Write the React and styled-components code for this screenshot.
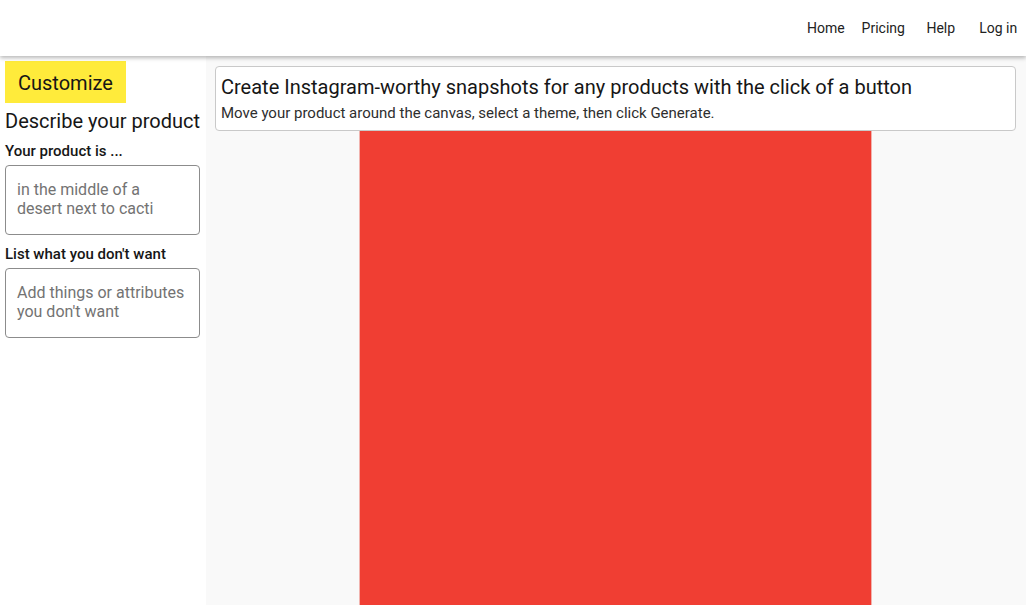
import React from 'react'
import styled, { createGlobalStyle } from 'styled-components'

const GlobalStyle = createGlobalStyle`
    html, body {
        margin: 0;
        padding: 0;
        height: 100%;
    }
    body {
        font-family: Roboto, 'Liberation Sans', sans-serif;
        color: #161616;
        background: #ffffff;
        overflow: hidden;
    }
`

const Page = styled.div`
    display: flex;
    flex-direction: column;
    height: 605px;
`

const Header = styled.header`
    height: 56px;
    flex: none;
    display: flex;
    align-items: center;
    justify-content: flex-end;
    background: #ffffff;
    box-shadow: 0 2px 4px rgba(0, 0, 0, 0.28);
    position: relative;
    z-index: 2;
`

const NavLink = styled.a`
    width: 57.5px;
    text-align: center;
    font-size: 14px;
    color: #222222;
    text-decoration: none;
    line-height: 20px;
    &:last-child {
        margin-right: -1px;
    }
`

const Body = styled.div`
    flex: 1;
    display: flex;
    min-height: 0;
`

const Sidebar = styled.aside`
    width: 206px;
    flex: none;
    box-sizing: border-box;
    padding: 5px 6px 0 5px;
    background: #ffffff;
    display: flex;
    flex-direction: column;
    align-items: flex-start;
`

const CustomizeButton = styled.button`
    height: 42px;
    padding: 2px 13px 0;
    border: none;
    border-radius: 0;
    background: #ffeb3b;
    font-family: inherit;
    font-size: 20px;
    color: #161616;
`

const SectionTitle = styled.h2`
    margin: 6px 0 0;
    font-size: 20px;
    font-weight: 400;
    line-height: 24px;
    white-space: nowrap;
`

const FieldLabel = styled.label`
    display: block;
    margin-top: ${p => p.$top}px;
    font-size: 15px;
    font-weight: 500;
    line-height: 18px;
`

const TextBox = styled.textarea`
    display: block;
    margin-top: 5px;
    width: 195px;
    height: 70px;
    box-sizing: border-box;
    padding: 14px 11px 12px;
    border: 1px solid #8c8c8c;
    border-radius: 4px;
    resize: none;
    font-family: inherit;
    font-size: 16px;
    line-height: 19px;
    color: #1f1f1f;
    background: #ffffff;
    &::placeholder {
        color: #737373;
    }
`

const Main = styled.main`
    flex: 1;
    background: #f9f9f9;
    padding: 10px 10px 0 9px;
    display: flex;
    flex-direction: column;
    align-items: center;
    min-width: 0;
`

const InfoCard = styled.div`
    align-self: stretch;
    background: #ffffff;
    border: 1px solid #c9c9c9;
    border-radius: 4px;
    padding: 8px 5px 7px;
`

const CardTitle = styled.h1`
    margin: 0;
    font-size: 20px;
    font-weight: 400;
    line-height: 24px;
    color: #161616;
`

const CardText = styled.p`
    margin: 4px 0 0;
    font-size: 15px;
    line-height: 20px;
    color: #2e2e2e;
`

const Canvas = styled.div`
    width: 511px;
    flex: 1;
    background: #f03e33;
    border-left: 1px solid #f1b3ae;
    border-right: 1px solid #f1b3ae;
`

const navItems = ['Home', 'Pricing', 'Help', 'Log in']

export default function App() {
    return (
        <Page>
            <GlobalStyle />
            <Header>
                {navItems.map(item => (
                    <NavLink key={item} href="#">
                        {item}
                    </NavLink>
                ))}
            </Header>
            <Body>
                <Sidebar>
                    <CustomizeButton>Customize</CustomizeButton>
                    <SectionTitle>Describe your product</SectionTitle>
                    <FieldLabel $top={9}>Your product is ...</FieldLabel>
                    <TextBox placeholder="in the middle of a desert next to cacti" />
                    <FieldLabel $top={10}>List what you don't want</FieldLabel>
                    <TextBox placeholder="Add things or attributes you don't want" />
                </Sidebar>
                <Main>
                    <InfoCard>
                        <CardTitle>
                            Create Instagram-worthy snapshots for any products
                            with the click of a button
                        </CardTitle>
                        <CardText>
                            Move your product around the canvas, select a
                            theme, then click Generate.
                        </CardText>
                    </InfoCard>
                    <Canvas />
                </Main>
            </Body>
        </Page>
    )
}
